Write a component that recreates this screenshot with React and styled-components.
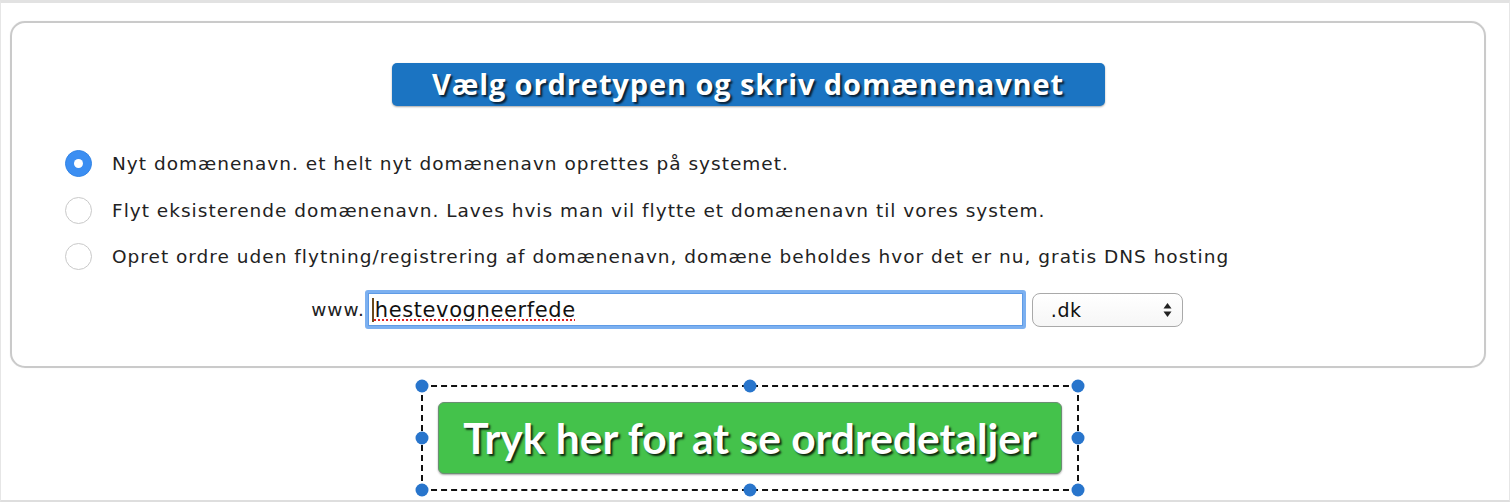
import React from 'react';
import styled, { createGlobalStyle } from 'styled-components';

const GlobalStyle = createGlobalStyle`
  html, body {
    margin: 0;
    padding: 0;
    background: #fff;
  }
`;

const Frame = styled.div`
  box-sizing: border-box;
  width: 1510px;
  height: 502px;
  border-top: 3px solid #e2e2e2;
  border-left: 1px solid #e6e6e6;
  border-right: 1px solid #e6e6e6;
  border-bottom: 2px solid #dedede;
  padding: 18px 23px 0 9px;
  display: flex;
  flex-direction: column;
  align-items: stretch;
  overflow: hidden;
`;

const Card = styled.div`
  border: 2px solid #cacaca;
  border-radius: 15px;
  box-shadow: 0 0 1px rgba(0, 0, 0, 0.15);
  padding: 40px 0 37px 0;
  display: flex;
  flex-direction: column;
`;

const Title = styled.div`
  align-self: center;
  width: 713px;
  height: 43px;
  box-sizing: border-box;
  background: #1b74c2;
  border-radius: 5px;
  box-shadow: 0 1px 2px rgba(0, 0, 0, 0.35);
  color: #fff;
  font-family: "Open Sans", Lato, sans-serif;
  font-weight: 700;
  font-size: 29px;
  letter-spacing: 0.9px;
  line-height: 42px;
  text-align: center;
  text-shadow: 2px 2px 2px rgba(0, 0, 0, 0.75);
`;

const Options = styled.div`
  margin-top: 34px;
  padding-left: 53px;
  display: flex;
  flex-direction: column;
`;

const OptionRow = styled.label`
  display: flex;
  align-items: center;
  gap: 20px;
  height: ${(p) => p.h || 46}px;
  font-family: "DejaVu Sans", Verdana, sans-serif;
  font-size: 18.5px;
  letter-spacing: 1px;
  color: #222;
`;

const Radio = styled.span`
  box-sizing: border-box;
  width: 27px;
  height: 27px;
  border-radius: 50%;
  flex: none;
  display: flex;
  align-items: center;
  justify-content: center;
  background: ${(p) => (p.checked ? '#3b8ef2' : '#fff')};
  border: ${(p) => (p.checked ? '1px solid #3284e6' : '1.5px solid #c9c9c9')};

  &::after {
    content: '';
    display: ${(p) => (p.checked ? 'block' : 'none')};
    width: 9px;
    height: 9px;
    border-radius: 50%;
    background: #fff;
  }
`;

const DomainRow = styled.div`
  margin-top: 12px;
  display: flex;
  align-items: center;
  justify-content: center;
  padding-right: 2px;
`;

const Prefix = styled.span`
  font-family: "DejaVu Sans", Verdana, sans-serif;
  font-size: 18.5px;
  letter-spacing: 1px;
  color: #222;
`;

const Field = styled.div`
  box-sizing: border-box;
  width: 661px;
  height: 39px;
  flex: none;
  border: 3px solid #7cb0f0;
  border-radius: 3px;
  box-shadow: inset 0 0 0 1px #5f9be6;
  display: flex;
  align-items: center;
  padding-left: 4px;
  font-family: "DejaVu Sans", Verdana, sans-serif;
  font-size: 21px;
  letter-spacing: 0.6px;
  color: #111;
`;

const Caret = styled.span`
  width: 2px;
  height: 24px;
  background: #6b4a1e;
  margin-right: 1px;
`;

const Misspelt = styled.span`
  text-decoration-line: underline;
  text-decoration-style: dotted;
  text-decoration-color: #e02020;
  text-decoration-thickness: 2px;
  text-underline-offset: 3px;
`;

const Select = styled.div`
  box-sizing: border-box;
  width: 151px;
  height: 34px;
  flex: none;
  margin-left: 6px;
  border: 1px solid #a9a9a9;
  border-radius: 8px;
  background: linear-gradient(#fff, #f6f6f6);
  display: flex;
  align-items: center;
  justify-content: space-between;
  padding: 0 10px 0 18px;
  font-family: "DejaVu Sans", Verdana, sans-serif;
  font-size: 19px;
  letter-spacing: 0.6px;
  color: #111;
`;

const ButtonArea = styled.div`
  margin-top: 17px;
  align-self: center;
  margin-left: 4px;
  position: relative;
  box-sizing: border-box;
  width: 658px;
  height: 106px;
  border: 2px dashed #111;
  display: flex;
  align-items: center;
  justify-content: center;
`;

const Handle = styled.span`
  position: absolute;
  width: 13px;
  height: 13px;
  border-radius: 50%;
  background: #2875cc;
  left: calc(${(p) => p.x * 100}% + ${(p) => (p.x - 0.5) * 2}px);
  top: calc(${(p) => p.y * 100}% + ${(p) => (p.y - 0.5) * 2}px);
  transform: translate(-50%, -50%);
`;

const GoButton = styled.div`
  box-sizing: border-box;
  width: 624px;
  height: 72px;
  background: #44c24b;
  border: 1px solid #6a8e72;
  border-radius: 6px;
  box-shadow: 0 1px 2px rgba(0, 0, 0, 0.35);
  color: #fff;
  font-family: Lato, "Open Sans", sans-serif;
  font-weight: 700;
  font-size: 42.5px;
  line-height: 70px;
  text-align: center;
  text-shadow: 2px 2px 2px rgba(0, 0, 0, 0.8);
`;

const options = [
  { text: 'Nyt domænenavn. et helt nyt domænenavn oprettes på systemet.', checked: true, h: 47 },
  { text: 'Flyt eksisterende domænenavn. Laves hvis man vil flytte et domænenavn til vores system.', h: 47 },
  { text: 'Opret ordre uden flytning/registrering af domænenavn, domæne beholdes hvor det er nu, gratis DNS hosting', h: 44 },
];

const handles = [
  [0, 0], [0.5, 0], [1, 0],
  [0, 0.5], [1, 0.5],
  [0, 1], [0.5, 1], [1, 1],
];

const SelectArrows = () => (
  <svg width="9" height="16" viewBox="0 0 9 16">
    <path d="M4.5 1 L8.5 6.5 L0.5 6.5 Z" fill="#222" />
    <path d="M4.5 15 L8.5 9.5 L0.5 9.5 Z" fill="#222" />
  </svg>
);

const App = () => {
  return (
    <>
      <GlobalStyle />
      <Frame>
        <Card>
          <Title>Vælg ordretypen og skriv domænenavnet</Title>
          <Options>
            {options.map((o, i) => (
              <OptionRow key={i} h={o.h}>
                <Radio checked={o.checked} />
                {o.text}
              </OptionRow>
            ))}
          </Options>
          <DomainRow>
            <Prefix>www.</Prefix>
            <Field>
              <Caret />
              <Misspelt>hestevogneerfede</Misspelt>
            </Field>
            <Select>
              .dk
              <SelectArrows />
            </Select>
          </DomainRow>
        </Card>
        <ButtonArea>
          {handles.map(([x, y], i) => (
            <Handle key={i} x={x} y={y} />
          ))}
          <GoButton>Tryk her for at se ordredetaljer</GoButton>
        </ButtonArea>
      </Frame>
    </>
  );
};

export default App;
